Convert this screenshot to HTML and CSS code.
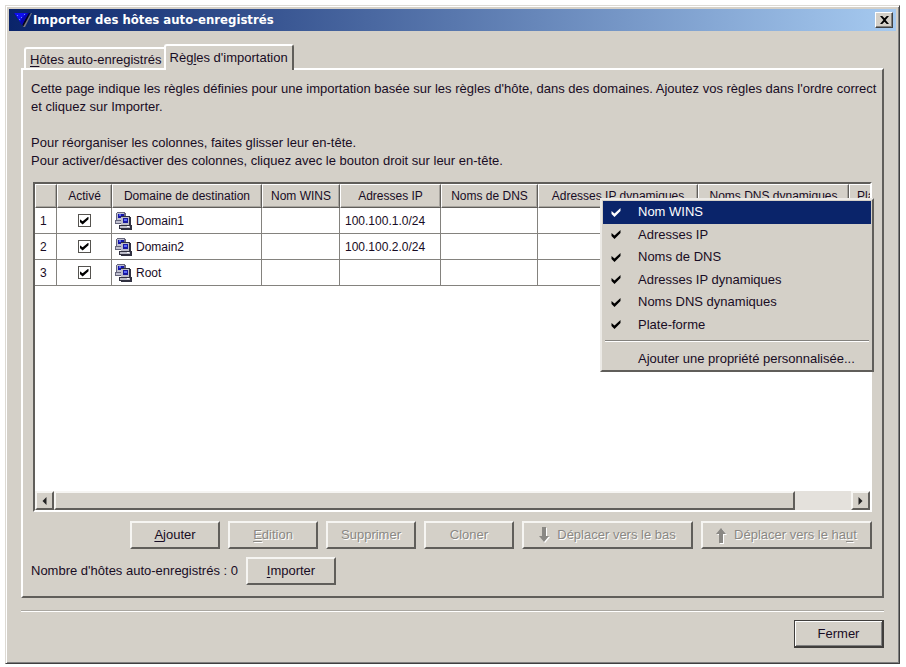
FILE: index.html
```html
<!DOCTYPE html>
<html lang="fr">
<head>
<meta charset="utf-8">
<title>Importer des hôtes auto-enregistrés</title>
<link rel="stylesheet" href="styles.css">
</head>
<body>
<svg class="defs" aria-hidden="true">
  <symbol id="hosts" viewBox="0 0 17 18">
    <path d="M2 0h8v1h1v7h1v4H0V8h1V1h1z" fill="#66667c"/>
    <path d="M2 1h7v7H2zM1 9h9v2H1z" fill="#c0c0d0"/>
    <path d="M3 2h6v4H3z" fill="#1414a8"/><path d="M4 2h2v2H4z" fill="#5a6af0"/>
    <path d="M6 4h9v1h1v8h1v5H6v-1H4v-4h2z" fill="#303040"/>
    <path d="M6 5h8v8H6zM5 14h10v2H5z" fill="#bcbcc8"/>
    <path d="M8 6h5v5H8z" fill="#1818a0"/><path d="M9 7h3v2H9z" fill="#5a6af8"/>
    <path d="M12 14h2v1h-2z" fill="#fff"/>
  </symbol>
  <symbol id="tick" viewBox="0 0 9 9"><path d="M0 3l3 2.500L9 0v3L3 9 0 6z" fill="currentColor"/></symbol>
  <symbol id="arrow" viewBox="0 0 10 16"><path d="M3 0h4v9h3l-5 6-5-6h3z" fill="currentColor"/></symbol>
</svg>
<main class="window">
  <header class="titlebar">
    <svg class="logo" viewBox="0 0 20 16" aria-hidden="true">
      <path d="M1 1h16l-6 14z" fill="#05051c"/>
      <path d="M1 1h14L9 13z" fill="#1010f0"/>
      <path d="M9 6l5-5h2L9 13 7 10z" fill="#0606b0"/>
      <path d="M4 3h1v1H4zM8 5h1v1H8zM11 2h1v1h-1zM6 7h1v1H6z" fill="#6a8aff"/>
      <path d="M10 15l8-14h1l-7 14z" fill="#77777f"/>
    </svg>
    <h1>Importer des hôtes auto-enregistrés</h1>
    <button class="close" type="button" aria-label="Fermer la fenêtre"><svg viewBox="0 0 8 7"><path d="M0 0h2l2 2 2-2h2L5 3.500 8 7H6L4 5 2 7H0l3-3.500z"/></svg></button>
  </header>
  <div class="tabs" role="tablist">
    <button class="tab" type="button" role="tab" aria-selected="false"><u>H</u>ôtes auto-enregistrés</button>
    <button class="tab tab-active" type="button" role="tab" aria-selected="true">Règ<u>l</u>es d'importation</button>
  </div>
  <section class="panel" role="tabpanel">
    <p>Cette page indique les règles définies pour une importation basée sur les règles d'hôte, dans des domaines. Ajoutez vos règles dans l'ordre correct et cliquez sur Importer.</p>
    <p>Pour réorganiser les colonnes, faites glisser leur en-tête.<br>Pour activer/désactiver des colonnes, cliquez avec le bouton droit sur leur en-tête.</p>
    <div class="grid-area">
      <div class="grid">
        <div class="viewport">
          <table>
            <colgroup><col class="c-num"><col class="c-on"><col class="c-domain"><col class="c-wins"><col class="c-ip"><col class="c-dns"><col class="c-dynip"><col class="c-dyndns"><col class="c-platform"></colgroup>
            <thead><tr><th></th><th>Activé</th><th>Domaine de destination</th><th>Nom WINS</th><th>Adresses IP</th><th>Noms de DNS</th><th>Adresses IP dynamiques</th><th>Noms DNS dynamiques</th><th class="start">Plate-forme</th></tr></thead>
            <tbody>
              <tr><td>1</td><td class="mid"><input type="checkbox" checked aria-label="Activer Domain1"></td><td><span class="host"><svg><use href="#hosts"/></svg>Domain1</span></td><td></td><td>100.100.1.0/24</td><td></td><td></td><td></td><td></td></tr>
              <tr><td>2</td><td class="mid"><input type="checkbox" checked aria-label="Activer Domain2"></td><td><span class="host"><svg><use href="#hosts"/></svg>Domain2</span></td><td></td><td>100.100.2.0/24</td><td></td><td></td><td></td><td></td></tr>
              <tr><td>3</td><td class="mid"><input type="checkbox" checked aria-label="Activer Root"></td><td><span class="host"><svg><use href="#hosts"/></svg>Root</span></td><td></td><td></td><td></td><td></td><td></td><td></td></tr>
            </tbody>
          </table>
        </div>
        <div class="scrollbar">
          <button type="button" aria-label="Défiler à gauche"><svg viewBox="0 0 4 8"><path d="M4 0v8L0 4z"/></svg></button>
          <div class="track"><div class="thumb"></div></div>
          <button type="button" aria-label="Défiler à droite"><svg viewBox="0 0 4 8"><path d="M0 0v8l4-4z"/></svg></button>
        </div>
      </div>
      <div class="menu" role="menu">
        <div class="menu-columns">
          <button type="button" role="menuitem" class="selected"><svg><use href="#tick"/></svg>Nom WINS</button>
          <button type="button" role="menuitem"><svg><use href="#tick"/></svg>Adresses IP</button>
          <button type="button" role="menuitem"><svg><use href="#tick"/></svg>Noms de DNS</button>
          <button type="button" role="menuitem"><svg><use href="#tick"/></svg>Adresses IP dynamiques</button>
          <button type="button" role="menuitem"><svg><use href="#tick"/></svg>Noms DNS dynamiques</button>
          <button type="button" role="menuitem"><svg><use href="#tick"/></svg>Plate-forme</button>
        </div>
        <hr>
        <button type="button" role="menuitem" class="plain">Ajouter une propriété personnalisée...</button>
      </div>
    </div>
    <div class="actions">
      <button class="btn" type="button"><span><u>A</u>jouter</span></button>
      <button class="btn" type="button" disabled><span><u>E</u>dition</span></button>
      <button class="btn" type="button" disabled>Supprimer</button>
      <button class="btn" type="button" disabled>Cloner</button>
      <button class="btn wide" type="button" disabled><svg><use href="#arrow"/></svg>Déplacer vers le bas</button>
      <button class="btn wide" type="button" disabled><svg class="up"><use href="#arrow"/></svg><span>Déplacer vers le ha<u>u</u>t</span></button>
    </div>
    <div class="import-row">
      <span>Nombre d'hôtes auto-enregistrés : 0</span>
      <button class="btn" type="button"><span><u>I</u>mporter</span></button>
    </div>
  </section>
  <footer class="footer"><button class="btn default" type="button">Fermer</button></footer>
</main>
</body>
</html>
```
FILE: styles.css
```css
:root {
  --face: #d4d0c8;
  --dark: #605e5a;
  --mid: #84827e;
}
* { box-sizing: border-box; }
body {
  margin: 0;
  min-height: 100vh;
  padding: 5px 6px 3px 5px;
  display: flex;
  background: #fff;
  color: #180c24;
  font: 13px/18px "Liberation Sans", Arial, sans-serif;
}
button { font: inherit; color: inherit; padding: 0; white-space: nowrap; }
svg { display: block; flex: none; }
u { text-underline-offset: 2px; }
.defs { display: none; }
.window {
  flex: 1;
  min-width: 0;
  display: flex;
  flex-direction: column;
  background: var(--face);
  border: 1px solid;
  border-color: #dddad4 #404040 #404040 #dddad4;
  box-shadow: inset 1px 1px #fff, inset -1px -1px #808080;
  padding: 3px;
}
.titlebar {
  display: flex;
  align-items: center;
  height: 22px;
  padding: 0 3px 0 4px;
  background: linear-gradient(90deg, #0a246a, #a6caf0);
  color: #fff;
}
.logo { width: 20px; height: 16px; }
h1 {
  flex: 1;
  margin: 0;
  font: bold 13px/18px "DejaVu Sans Condensed", "DejaVu Sans", sans-serif;
}
.close {
  display: grid;
  place-items: center;
  width: 18px;
  height: 16px;
  background: var(--face);
  border: 1px solid;
  border-color: #fff #404040 #404040 #fff;
  box-shadow: inset -1px -1px var(--mid);
}
.close svg { width: 9px; height: 8px; fill: #000; }
.tabs { display: flex; align-items: flex-end; height: 37px; padding: 0 15px; }
.tab {
  height: 21px;
  padding: 2px 4px 0;
  background: var(--face);
  border: 2px solid #fff;
  border-width: 2px 0 0 2px;
  border-radius: 3px 0 0 0;
}
.tab-active {
  height: 26px;
  margin: 0 0 -2px -2px;
  padding: 0 4px;
  border-right: 2px solid var(--dark);
  border-radius: 3px 3px 0 0;
  position: relative;
}
.panel {
  flex: 1;
  display: flex;
  flex-direction: column;
  margin: 0 12px 12px;
  padding: 10px 9px 11px 8px;
  border: 2px solid;
  border-color: #fff var(--dark) var(--dark) #fff;
}
p { margin: 0 -8px 18px 0; }
.grid-area {
  flex: 1;
  display: flex;
  margin: -6px 1px 9px 2px;
  position: relative;
}
.grid {
  flex: 1;
  min-width: 0;
  display: flex;
  flex-direction: column;
  background: #fff;
  border: 2px solid;
  border-color: var(--dark) #fff #fff var(--dark);
}
.viewport { flex: 1; overflow: hidden; }
table {
  width: 890px;
  table-layout: fixed;
  border-collapse: separate;
  border-spacing: 0;
  font-size: 12px;
}
.c-num { width: 22px; }
.c-on { width: 55px; }
.c-domain { width: 150px; }
.c-wins { width: 78px; }
.c-ip { width: 101px; }
.c-dns { width: 97px; }
.c-dynip { width: 160px; }
.c-dyndns { width: 151px; }
.c-platform { width: 76px; }
th {
  height: 24px;
  padding: 0;
  background: var(--face);
  font-weight: normal;
  white-space: nowrap;
  border: 1px solid;
  border-color: #fff var(--dark) var(--dark) #fff;
  box-shadow: inset -1px -1px #a8a59f;
}
th.start { text-align: left; padding-left: 7px; }
td {
  height: 26px;
  padding: 0 5px;
  border: solid var(--mid);
  border-width: 0 1px 1px 0;
}
td.mid { padding: 0; }
.host { display: flex; align-items: center; gap: 4px; margin-left: -2px; }
.host svg { width: 17px; height: 18px; }
input[type="checkbox"] {
  appearance: none;
  width: 13px;
  height: 13px;
  margin: 0 auto;
  border: 1px solid #55534f;
  background: #fff;
  display: grid;
  place-items: center;
}
input[type="checkbox"]::before {
  content: "";
  width: 9px;
  height: 8px;
  background: #000;
  clip-path: polygon(0 30%, 35% 60%, 100% 0, 100% 35%, 35% 100%, 0 65%);
}
.scrollbar { display: flex; height: 19px; background: #e4e1dc; }
.scrollbar button, .thumb {
  background: var(--face);
  border: 2px solid;
  border-color: #f6f5f2 var(--dark) var(--dark) #f6f5f2;
}
.scrollbar button { display: grid; place-items: center; width: 19px; }
.scrollbar svg { width: 5px; height: 8px; fill: #222; }
.track { flex: 1; display: flex; }
.thumb { width: 93%; }
.menu {
  position: absolute;
  top: 16px;
  right: -2px;
  width: 274px;
  padding: 1px 1px 0;
  background: var(--face);
  border: 2px solid;
  border-color: #eceae6 var(--dark) var(--dark) #eceae6;
}
.menu-columns { display: grid; grid-auto-rows: 1fr; height: 135px; }
.menu button {
  display: flex;
  align-items: center;
  gap: 17px;
  width: 100%;
  min-height: 22px;
  padding-left: 8px;
  border: 0;
  background: none;
}
.menu svg { width: 10px; height: 9px; color: #000; }
.menu .selected { background: #0a246a; color: #fff; }
.menu .selected svg { color: #fff; }
.menu .plain { padding-left: 35px; }
.menu hr {
  height: 2px;
  margin: 4px 2px 6px;
  border: solid;
  border-width: 1px 0;
  border-color: var(--mid) transparent #fff;
}
.actions { display: flex; justify-content: flex-end; gap: 8px; margin-right: 1px; }
.btn {
  display: flex;
  align-items: center;
  justify-content: center;
  width: 90px;
  height: 28px;
  background: var(--face);
  border: 2px solid;
  border-color: #f6f5f2 var(--dark) var(--dark) #f6f5f2;
}
.btn:disabled { color: #8a8884; text-shadow: 1px 1px #fff; }
.wide { width: 171px; gap: 8px; }
.wide svg { width: 10px; height: 16px; filter: drop-shadow(1px 1px #fff); }
.wide .up { rotate: 180deg; filter: drop-shadow(-1px -1px #fff); }
.import-row { display: flex; align-items: center; gap: 8px; margin-top: 8px; }
.footer {
  display: flex;
  justify-content: flex-end;
  margin: 0 12px;
  padding: 9px 0 12px;
  border-top: 1px solid #aaa7a1;
  box-shadow: inset 0 1px #fff;
}
.default { border-color: #403e3c; box-shadow: inset 1px 1px #fff, inset -1px -1px #808080; border-width: 1px 2px 2px 1px; }
```
